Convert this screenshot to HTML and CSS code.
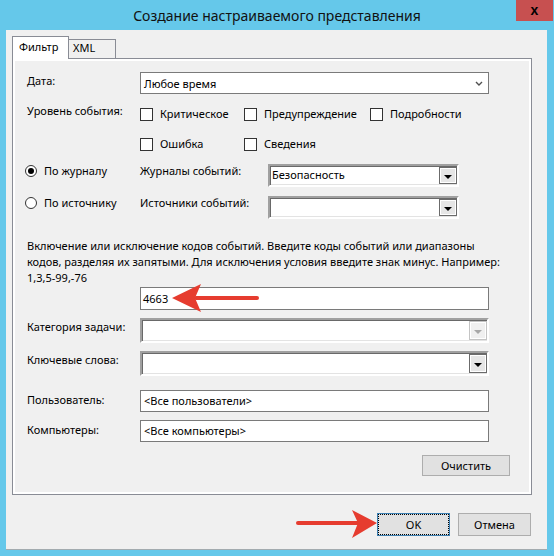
FILE: index.html
```html
<!DOCTYPE html>
<html lang="ru">
<head>
    <meta charset="UTF-8">
    <title>Создание настраиваемого представления</title>
    <link rel="stylesheet" href="styles.css">
</head>
<body>
    <div class="window">
        <div class="titlebar">
            <span class="title">Создание настраиваемого представления</span>
            <span class="close">x</span>
        </div>

        <div class="client">
            <div class="tabs">
                <div class="tab tab-active">Фильтр</div>
                <div class="tab tab-xml">XML</div>
            </div>

            <div class="panel">
                <!-- дата -->
                <div class="row">
                    <div class="lbl lbl-date">Дата:</div>
                    <div class="select">
                        <span>Любое время</span>
                        <svg class="chevron" width="8" height="6" viewBox="0 0 8 6">
                            <polyline points="1,1 4,4 7,1" fill="none" stroke="#505050" stroke-width="1.4"/>
                        </svg>
                    </div>
                </div>

                <!-- уровень события -->
                <div class="row row-level">
                    <div class="lbl lbl-level">Уровень события:</div>
                    <div class="checks">
                        <div class="chk"><span class="box"></span>Критическое</div>
                        <div class="chk"><span class="box"></span>Предупреждение</div>
                        <div class="chk"><span class="box"></span>Подробности</div>
                        <div class="chk"><span class="box"></span>Ошибка</div>
                        <div class="chk"><span class="box"></span>Сведения</div>
                    </div>
                </div>

                <!-- по журналу / по источнику -->
                <div class="row row-log">
                    <div class="radio-col"><span class="radio radio-on"></span>По журналу</div>
                    <div class="lbl2">Журналы событий:</div>
                    <div class="combo combo-small">
                        <span class="combo-text">Безопасность</span>
                        <span class="drop"><span class="tri"></span></span>
                    </div>
                </div>
                <div class="row row-src">
                    <div class="radio-col"><span class="radio"></span>По источнику</div>
                    <div class="lbl2">Источники событий:</div>
                    <div class="combo combo-small">
                        <span class="combo-text"></span>
                        <span class="drop"><span class="tri"></span></span>
                    </div>
                </div>

                <p class="note">Включение или исключение кодов событий. Введите коды событий или диапазоны<br>кодов, разделяя их запятыми. Для исключения условия введите знак минус. Например:<br>1,3,5-99,-76</p>

                <div class="input input-id">4663</div>

                <div class="row row-cat">
                    <div class="lbl lbl-combo">Категория задачи:</div>
                    <div class="combo combo-wide">
                        <span class="combo-text"></span>
                        <span class="drop drop-off"><span class="tri"></span></span>
                    </div>
                </div>
                <div class="row row-kw">
                    <div class="lbl lbl-combo">Ключевые слова:</div>
                    <div class="combo combo-wide">
                        <span class="combo-text"></span>
                        <span class="drop"><span class="tri"></span></span>
                    </div>
                </div>

                <div class="row row-user">
                    <div class="lbl lbl-input">Пользователь:</div>
                    <div class="input">&lt;Все пользователи&gt;</div>
                </div>
                <div class="row row-pc">
                    <div class="lbl lbl-input">Компьютеры:</div>
                    <div class="input">&lt;Все компьютеры&gt;</div>
                </div>

                <div class="clear-row">
                    <button class="btn btn-clear">Очистить</button>
                </div>
            </div>

            <div class="footer">
                <button class="btn btn-ok">OK</button>
                <button class="btn">Отмена</button>
            </div>
        </div>

        <!-- красные стрелки поверх формы -->
        <svg class="marks" width="554" height="556" viewBox="0 0 554 556">
            <line x1="196" y1="298" x2="257" y2="298" stroke="#e63c2f" stroke-width="4" stroke-linecap="round"/>
            <polygon points="172,298 201,284 195,298 201,312" fill="#e63c2f"/>
            <line x1="298" y1="523" x2="358" y2="523" stroke="#e63c2f" stroke-width="4" stroke-linecap="round"/>
            <polygon points="377,523 352,510 358,523 352,538" fill="#e63c2f"/>
        </svg>
    </div>
</body>
</html>
```

FILE: styles.css
```css
* {
    box-sizing: border-box;
}
body {
    margin: 0;
    background: #65c8ea;
    font-family: "Noto Sans", "Open Sans", sans-serif;
    font-size: 11px;
    color: #000;
}
.window {
    position: relative;
    width: 554px;
    height: 556px;
}
.titlebar {
    height: 30px;
    display: flex;
    align-items: center;
    justify-content: center;
}
.title {
    font-size: 14px;
    color: #111;
    margin-top: 1px;
}
.close {
    position: absolute;
    top: 0;
    right: 1px;
    width: 37px;
    height: 21px;
    background: #c75050;
    display: flex;
    align-items: center;
    justify-content: center;
    font: bold 14px "Liberation Sans", sans-serif;
    color: #000;
    padding-bottom: 2px;
}
.client {
    margin-left: 6px;
    width: 541px;
    height: 520px;
    background: #f0f0f0;
    border-bottom: 1px solid #a3abaf;
    padding: 6px 0 0 6px;
}

/* вкладки */
.tabs {
    display: flex;
    align-items: flex-end;
    height: 22px;
}
.tab {
    border: 1px solid #898c95;
    border-bottom: none;
    line-height: 14px;
}
.tab-active {
    position: relative;
    z-index: 1;
    width: 57px;
    height: 23px;
    margin-bottom: -1px;
    padding: 3px 0 0 6px;
    background: #fff;
}
.tab-xml {
    width: 48px;
    height: 19px;
    margin-left: -1px;
    padding: 1px 0 0 4px;
    background: #f0f0f0;
}
.panel {
    width: 520px;
    height: 437px;
    border: 1px solid #898c95;
    box-shadow: inset 0 0 0 2px #fff;
    padding: 13px 0 0 14px;
}

/* строки формы */
.row {
    display: flex;
    align-items: flex-start;
}
.lbl {
    width: 113px;
    line-height: 14px;
}
.lbl-date {
    margin-top: 2px;
}
.select {
    width: 349px;
    height: 22px;
    border: 1px solid #7a7a7a;
    background: #fff;
    display: flex;
    align-items: center;
    justify-content: space-between;
    padding: 0 5px 0 3px;
}
.chevron {
    margin-top: 1px;
}
.row-level {
    margin-top: 13px;
}
.lbl-level {
    margin-top: -3px;
}
.checks {
    display: grid;
    grid-template-columns: 104px 126px auto;
    row-gap: 16px;
}
.chk {
    display: flex;
    align-items: center;
    height: 14px;
    line-height: 14px;
}
.box {
    width: 13px;
    height: 13px;
    border: 1px solid #333;
    background: #fff;
    margin-right: 7px;
}
.row-log {
    margin-top: 13px;
}
.row-src {
    margin-top: 9px;
}
.radio-col {
    width: 115px;
    margin-left: -2px;
    display: flex;
    align-items: center;
    height: 14px;
    line-height: 14px;
}
.radio {
    position: relative;
    width: 12px;
    height: 12px;
    border-radius: 50%;
    border: 1px solid #333;
    background: #fff;
    margin-right: 7px;
}
.radio-on::after {
    content: "";
    position: absolute;
    left: 2px;
    top: 2px;
    width: 6px;
    height: 6px;
    border-radius: 50%;
    background: #000;
}
.lbl2 {
    width: 128px;
    line-height: 14px;
}

/* комбобоксы в старом стиле */
.combo {
    display: flex;
    justify-content: space-between;
    border-style: solid;
    border-width: 2px;
    border-color: #a0a0a0 #fff #fff #a0a0a0;
    box-shadow: inset 1px 1px 0 #696969, inset -1px -1px 0 #e3e3e3;
    background: #fff;
}
.combo-small {
    width: 191px;
    height: 23px;
}
.combo-wide {
    width: 349px;
    height: 25px;
}
.combo-text {
    padding: 0 0 0 2px;
    line-height: 18px;
}
.drop {
    width: 18px;
    margin: 1px 0 1px 0;
    border: 1px solid #6b6b6b;
    background: #e6e6e6;
    box-shadow: inset 0 0 0 1px #fff;
    display: flex;
    align-items: center;
    justify-content: center;
}
.tri {
    width: 0;
    height: 0;
    margin-top: 2px;
    border-left: 4px solid transparent;
    border-right: 4px solid transparent;
    border-top: 4px solid #000;
}
.drop-off {
    border-color: #c4c4c4;
    background: #f0f0f0;
}
.drop-off .tri {
    border-top-color: #a8a8a8;
}

.note {
    margin: 19px 0 0;
    line-height: 16px;
}
.input {
    width: 349px;
    height: 22px;
    border: 1px solid #7a7a7a;
    background: #fff;
    padding-left: 3px;
    line-height: 20px;
}
.input-id {
    margin-top: 1px;
    margin-left: 113px;
    height: 23px;
    padding-left: 2px;
    line-height: 21px;
}
.row-cat {
    margin-top: 8px;
}
.row-kw {
    margin-top: 8px;
}
.lbl-combo {
    margin-top: 2px;
}
.row-user {
    margin-top: 14px;
}
.row-pc {
    margin-top: 8px;
}
.lbl-input {
    margin-top: 3px;
}
.clear-row {
    display: flex;
    justify-content: flex-end;
    margin-top: 13px;
    padding-right: 21px;
}

/* кнопки */
.btn {
    height: 23px;
    width: 73px;
    border: 1px solid #adadad;
    background: #e1e1e1;
    font: inherit;
    color: #000;
    padding: 0;
}
.btn-clear {
    width: 88px;
    height: 21px;
}
.btn-ok {
    border-color: #3c7fb1;
    outline: 1px dotted #000;
    outline-offset: -2px;
}
.footer {
    display: flex;
    justify-content: flex-end;
    gap: 8px;
    margin-top: 18px;
    padding-right: 16px;
}
.marks {
    position: absolute;
    left: 0;
    top: 0;
    pointer-events: none;
}
```
